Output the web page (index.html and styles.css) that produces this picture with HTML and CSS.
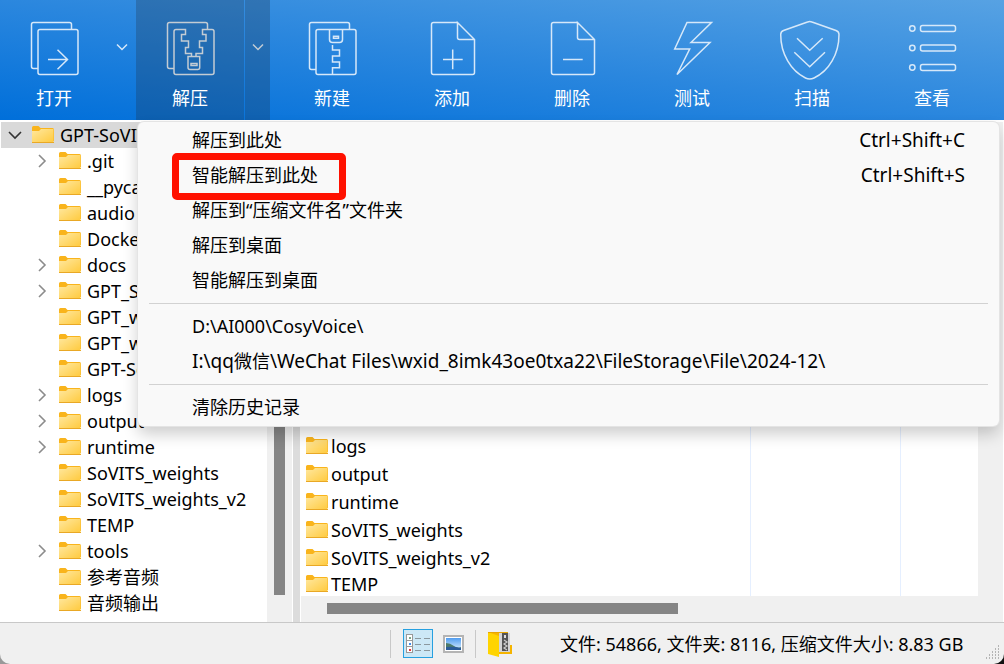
FILE: index.html
```html
<!DOCTYPE html>
<html lang="zh-CN">
 <head>
  <title>GPT-SoVITS</title>
  <meta charset="UTF-8">
  <link rel="stylesheet" href="styles.css">
 </head>
 <body>

 <!-- shared symbols -->
 <svg class="symbols">
  <defs>
   <linearGradient id="folder-fill" x1="0" y1="0" x2="1" y2="1">
    <stop offset="0" stop-color="#ffe8a0"/>
    <stop offset="1" stop-color="#ffca3e"/>
   </linearGradient>
   <linearGradient id="photo-fill" x1="0" y1="0" x2="0" y2="1">
    <stop offset="0" stop-color="#4f9cf0"/>
    <stop offset="1" stop-color="#dcefff"/>
   </linearGradient>
  </defs>
  <symbol id="folder" viewBox="0 0 22 18">
   <path d="M0 1.500q0-1.500 1.500-1.500h5l2 2H20.500q1.500 0 1.500 1.500V15H0z" fill="#f9b41c"/>
   <path d="M0 5h7l2-2h12.500v13.500H0z" fill="url(#folder-fill)"/>
   <path d="M0 16h22v1H0z" fill="#e9a825"/>
  </symbol>
  <symbol id="right" viewBox="0 0 12 14">
   <path d="M3 1l6 6-6 6" fill="none" stroke="#8c8c8c" stroke-width="1.600"/>
  </symbol>
  <symbol id="down" viewBox="0 0 14 12">
   <path d="M1 3l6 6 6-6" fill="none" stroke="#333" stroke-width="1.600"/>
  </symbol>
 </svg>

 <div class="window">

  <nav class="toolbar">
   <button class="tool narrow">
    <svg class="icon" viewBox="0 0 60 60"><path d="M14 48.500H9.500Q7.500 48.500 7.500 46.500V4.500Q7.500 2.500 9.500 2.500H45.500Q47.500 2.500 47.500 4.500V9.500"/><rect x="14" y="9.500" width="40" height="45" rx="2"/><path d="M24 39.500H43.500M33.500 29.700L43.500 39.500L33.500 49.300"/></svg>
    <span>打开</span>
   </button>
   <button class="drop" aria-label="打开选项"><svg viewBox="0 0 12 8"><path d="M1 1.500l5 5 5-5"/></svg></button>
   <button class="tool narrow active">
    <svg class="icon" viewBox="0 0 60 60"><path d="M14 48.500H9.500Q7.500 48.500 7.500 46.500V4.500Q7.500 2.500 9.500 2.500H45.500Q47.500 2.500 47.500 4.500V9.500"/><path d="M31.500 36V33.500H25.500V27.500H28.500V21H21.500V14.500H25.500V9.500H16Q14 9.500 14 11.500V52.500Q14 54.500 16 54.500H52Q54 54.500 54 52.500V11.500Q54 9.500 52 9.500H42.500V14.500H46V21H39.500V27.500H42.500V33.500H36V36"/><path d="M28 36.500H39.700V47.500Q39.700 49.500 37.700 49.500H30Q28 49.500 28 47.500z"/><rect x="31" y="43.500" width="6" height="2"/></svg>
    <span>解压</span>
   </button>
   <button class="drop active" aria-label="解压选项"><svg viewBox="0 0 12 8"><path d="M1 1.500l5 5 5-5"/></svg></button>
   <button class="tool">
    <svg class="icon" viewBox="0 0 60 60"><path d="M14 49.500H9.500Q7.500 49.500 7.500 47.500V4.500Q7.500 2.500 9.500 2.500H45.500Q47.500 2.500 47.500 4.500V9.500"/><rect x="14" y="9.500" width="40" height="45" rx="2"/><path d="M27.500 9.500V19.500Q27.500 22.500 30.500 22.500H37.500Q40.500 22.500 40.500 19.500V9.500"/><rect x="31.500" y="16.300" width="5" height="2"/><path d="M30.500 25V30H37.500V36H30.500V42H37.500V47.700H30.500V54.500"/></svg>
    <span>新建</span>
   </button>
   <button class="tool">
    <svg class="icon" viewBox="0 0 60 60"><path d="M35 2.500H11.500Q9.500 2.500 9.500 4.500V52.500Q9.500 54.500 11.500 54.500H50.500Q52.500 54.500 52.500 52.500V19.500L35.500 2.500V17.500Q35.500 19.500 37.500 19.500H52.500M21 39.500H40.700M30.700 29.500V49.300"/></svg>
    <span>添加</span>
   </button>
   <button class="tool">
    <svg class="icon" viewBox="0 0 60 60"><path d="M35 2.500H11.500Q9.500 2.500 9.500 4.500V52.500Q9.500 54.500 11.500 54.500H50.500Q52.500 54.500 52.500 52.500V19.500L35.500 2.500V17.500Q35.500 19.500 37.500 19.500H52.500M21 39.500H40.700"/></svg>
    <span>删除</span>
   </button>
   <button class="tool">
    <svg class="icon" viewBox="0 0 60 60"><path d="M25 2.500H49.500L29 22.500H48L15 54.500L27.700 29H12.700z"/></svg>
    <span>测试</span>
   </button>
   <button class="tool">
    <svg class="icon" viewBox="0 0 60 60"><path d="M25.500 2Q27.700 1 30 2L54 10.500Q57 11.600 57 14.500C57 34 47 51 32 58Q27.700 60 23.500 58C9 51-1.300 34-1.300 14.500Q-1.300 11.600 1.500 10.500zM15 18.300L27.700 30.300L40.700 18.300M12.300 32.300L27.700 46.700L43 32.300"/></svg>
    <span>扫描</span>
   </button>
   <button class="tool">
    <svg class="icon" viewBox="0 0 60 60"><circle cx="10.300" cy="8.500" r="2.700"/><circle cx="10.300" cy="28" r="2.700"/><circle cx="10.300" cy="47.500" r="2.700"/><rect x="18.500" y="5.500" width="35" height="6" rx="2"/><rect x="18.500" y="25" width="35" height="6" rx="2"/><rect x="18.500" y="44.500" width="35" height="6" rx="2"/></svg>
    <span>查看</span>
   </button>
  </nav>

  <main class="content">
   <section class="tree">
    <ul class="tree-list">
     <li class="root"><svg class="toggle"><use href="#down"/></svg><svg class="folder"><use href="#folder"/></svg>GPT-SoVITS</li>
     <li><svg class="toggle"><use href="#right"/></svg><svg class="folder"><use href="#folder"/></svg>.git</li>
     <li><svg class="toggle"></svg><svg class="folder"><use href="#folder"/></svg>__pycache__</li>
     <li><svg class="toggle"></svg><svg class="folder"><use href="#folder"/></svg>audio</li>
     <li><svg class="toggle"></svg><svg class="folder"><use href="#folder"/></svg>Docker</li>
     <li><svg class="toggle"><use href="#right"/></svg><svg class="folder"><use href="#folder"/></svg>docs</li>
     <li><svg class="toggle"><use href="#right"/></svg><svg class="folder"><use href="#folder"/></svg>GPT_SoVITS</li>
     <li><svg class="toggle"></svg><svg class="folder"><use href="#folder"/></svg>GPT_weights</li>
     <li><svg class="toggle"></svg><svg class="folder"><use href="#folder"/></svg>GPT_weights_v2</li>
     <li><svg class="toggle"></svg><svg class="folder"><use href="#folder"/></svg>GPT-SoVITS</li>
     <li><svg class="toggle"><use href="#right"/></svg><svg class="folder"><use href="#folder"/></svg>logs</li>
     <li><svg class="toggle"><use href="#right"/></svg><svg class="folder"><use href="#folder"/></svg>output</li>
     <li><svg class="toggle"><use href="#right"/></svg><svg class="folder"><use href="#folder"/></svg>runtime</li>
     <li><svg class="toggle"></svg><svg class="folder"><use href="#folder"/></svg>SoVITS_weights</li>
     <li><svg class="toggle"></svg><svg class="folder"><use href="#folder"/></svg>SoVITS_weights_v2</li>
     <li><svg class="toggle"></svg><svg class="folder"><use href="#folder"/></svg>TEMP</li>
     <li><svg class="toggle"><use href="#right"/></svg><svg class="folder"><use href="#folder"/></svg>tools</li>
     <li><svg class="toggle"></svg><svg class="folder"><use href="#folder"/></svg>参考音频</li>
     <li><svg class="toggle"></svg><svg class="folder"><use href="#folder"/></svg>音频输出</li>
    </ul>
    <div class="vscroll"><div class="vthumb"></div></div>
   </section>
   <div class="splitter"></div>
   <section class="files">
    <div class="file-view">
     <table class="file-table">
      <tbody>
       <tr class="scrolled"><td class="name"></td><td class="size"></td><td class="kind"></td></tr>
       <tr><td><div class="file"><svg class="folder"><use href="#folder"/></svg>logs</div></td><td></td><td></td></tr>
       <tr><td><div class="file"><svg class="folder"><use href="#folder"/></svg>output</div></td><td></td><td></td></tr>
       <tr><td><div class="file"><svg class="folder"><use href="#folder"/></svg>runtime</div></td><td></td><td></td></tr>
       <tr><td><div class="file"><svg class="folder"><use href="#folder"/></svg>SoVITS_weights</div></td><td></td><td></td></tr>
       <tr><td><div class="file"><svg class="folder"><use href="#folder"/></svg>SoVITS_weights_v2</div></td><td></td><td></td></tr>
       <tr><td><div class="file last"><svg class="folder"><use href="#folder"/></svg>TEMP</div></td><td></td><td></td></tr>
      </tbody>
     </table>
    </div>
    <div class="hscroll"><div class="hthumb"></div></div>
   </section>
  </main>

  <footer class="status">
   <div class="views">
    <button class="view selected" aria-label="列表">
     <svg width="28" height="27" viewBox="0 0 28 27"><g fill="#fff" stroke="#999"><rect x="2.500" y="4.500" width="6" height="6"/><rect x="2.500" y="10.500" width="6" height="6"/><rect x="2.500" y="16.500" width="6" height="6"/></g><path d="M11 8.500h6M20 8.500h6M11 14.500h6M20 14.500h6M11 20.500h6M20 20.500h6" stroke="#8b989e"/><path d="M5 7h2v2H5z" fill="#7aa88a"/><path d="M5 13h2v2H5z" fill="#3d8ef0"/><path d="M5 19h2v2H5z" fill="#e33"/></svg>
    </button>
    <button class="view" aria-label="缩略图">
     <svg width="21" height="18" viewBox="0 0 21 18"><rect x="1" y="1" width="19" height="16" fill="#fff" stroke="#b4b4b4" stroke-width="2"/><rect x="3" y="3" width="15" height="12" fill="url(#photo-fill)"/><path d="M3 8q4 0 8 3t7 1v3H3z" fill="#4d7a6a"/><path d="M3 12q7-1 15 1v2H3z" fill="#2c5c99"/></svg>
    </button>
   </div>
   <button class="view archive" aria-label="压缩文件">
    <svg width="26" height="27" viewBox="0 0 26 27"><path d="M1 3h20v12h4v9H1z" fill="#f5b400"/><path d="M12 3h11v19H12z" fill="#d4d4d4"/><path d="M15 3h6v18h-6z" fill="#555"/><path d="M17 5h2v3h-2z" fill="#ddd"/><path d="M17 10l3 2-3 2 3 2-3 2 3 2" fill="none" stroke="#ccc" stroke-width="1.200"/><path d="M1 2l11 4v21L1 24z" fill="#ffd400"/><path d="M1 2.500h20" stroke="#e8a500"/></svg>
   </button>
   <span class="summary">文件: 54866, 文件夹: 8116, 压缩文件大小: 8.83 GB</span>
   <svg class="grip" viewBox="0 0 15 15"><path d="M13 1h1M10 4h1M13 4h1M7 7h1M10 7h1M13 7h1M4 10h1M7 10h1M10 10h1M13 10h1M1 13h1M4 13h1M7 13h1M10 13h1M13 13h1" stroke="#a0a0a0" stroke-width="1.500"/></svg>
  </footer>

  <!-- drop-down of the extract button -->
  <div class="menu" role="menu">
   <button class="item" role="menuitem"><span>解压到此处</span><span class="latin">Ctrl+Shift+C</span></button>
   <button class="item" role="menuitem"><span class="marked">智能解压到此处</span><span class="latin">Ctrl+Shift+S</span></button>
   <button class="item" role="menuitem">解压到“压缩文件名”文件夹</button>
   <button class="item" role="menuitem">解压到桌面</button>
   <button class="item" role="menuitem">智能解压到桌面</button>
   <hr>
   <button class="item" role="menuitem">D:\AI000\CosyVoice\</button>
   <button class="item" role="menuitem"><span class="latin">I:\qq<span class="han">微信</span>\WeChat Files\wxid_8imk43oe0txa22\FileStorage\File\2024-12\</span></button>
   <hr>
   <button class="item" role="menuitem">清除历史记录</button>
  </div>

 </div>

</body>
</html>
```
FILE: styles.css
```css
* { box-sizing: border-box; }
html { background: linear-gradient(to right, #999, #111); }
body { margin: 0; font: 18px/26px "Noto Sans", "Noto Sans CJK SC", sans-serif; color: #000; }
button { margin: 0; padding: 0; border: 0; background: none; font: inherit; color: inherit; }
.symbols { position: absolute; width: 0; height: 0; }

.window { position: relative; display: flex; flex-direction: column; height: 100vh; background: #f0f0f0; border-radius: 0 0 10px 10px; overflow: hidden; }

/* toolbar */
.toolbar { display: flex; flex: none; height: 120px; padding-right: 12px; background: linear-gradient(to top right, #006fda, #2b87de, #57a2e3); color: #fff; }
.tool { flex: 1 1 120px; display: flex; flex-direction: column; align-items: center; padding-top: 20px; }
.narrow { flex: 0 0 108px; }
.icon { width: 60px; height: 60px; overflow: visible; fill: none; stroke: #d6e8f9; stroke-width: 1.5px; }
.tool span { margin-top: 6px; line-height: 24px; }
.drop { flex: none; width: 28px; padding-bottom: 32px; }
.drop svg { width: 12px; height: 8px; fill: none; stroke: #d6e8f9; stroke-width: 1.5px; }
.active { background: rgba(30, 40, 50, .25); }
.active svg { stroke: #c3ccd4; }
.drop.active { width: 25px; margin: 0 2px 0 1px; }

/* panels */
.content { flex: 1; display: flex; min-height: 0; padding-top: 2px; background: #fff; }
.tree { flex: none; width: 293px; display: flex; padding-right: 1px; overflow: hidden; }
.tree-list { flex: 1; min-width: 0; margin: 0; padding: 0; list-style: none; overflow: hidden; white-space: nowrap; }
.tree-list li { display: flex; align-items: center; height: 26px; padding-left: 35px; }
.tree-list .root { margin-left: 1px; padding-left: 7px; background: #d9d9d9; }
.toggle { flex: none; width: 14px; height: 14px; margin-right: 10px; }
.folder { flex: none; width: 22px; height: 18px; margin-right: 6px; }
.vscroll { flex: none; width: 25px; padding: 0 7px 27px; background: #f0f0f0; }
.vthumb { height: 100%; background: #858585; }
.splitter { flex: none; width: 7px; background: #dcdcdc; }
.files { flex: 1; min-width: 0; display: flex; flex-direction: column; padding: 0 1px; }
.file-view { flex: 1; min-height: 0; padding-right: 25px; background: #f0f0f0; overflow: hidden; }
.file-table { width: 100%; table-layout: fixed; border-spacing: 0; background: #fff; }
.file-table td { padding: 0; border-right: 1px solid #e5efff; }
.file-table td:last-child { border-right: 0; }
.file-table .size { width: 150px; }
.file-table .kind { width: 77px; }
.scrolled td { height: 310px; }
.file { display: flex; align-items: center; height: 28px; padding-left: 5px; line-height: 20px; }
.file .folder { margin-right: 3px; }
.last { height: 24px; }
.hscroll { flex: none; height: 26px; padding: 7px 26px; background: #f0f0f0; }
.hthumb { width: 54%; height: 11px; background: #858585; }

/* status bar */
.status { position: relative; flex: none; display: flex; align-items: center; height: 42px; padding-left: 390px; border-top: 1px solid #c8c8c8; white-space: nowrap; }
.views { display: flex; align-items: center; gap: 10px; height: 28px; padding: 0 11px 0 12px; border-left: 1px solid #c8c8c8; border-right: 1px solid #c8c8c8; }
.view { display: flex; }
.selected { background: #cce8f6; border: 1px solid #26a0e0; }
.archive { margin: 0 47px 0 11px; }
.grip { position: absolute; right: 4px; bottom: 4px; width: 15px; height: 15px; }

/* menu */
.menu { position: absolute; top: 122px; left: 138px; right: 5px; padding: 0 11px 2px; background: #f9f9f9; border-radius: 6px; box-shadow: 0 0 0 1px #e4e4e4, 0 8px 16px rgba(0, 0, 0, .2); }
.item { display: flex; justify-content: space-between; align-items: center; width: 100%; height: 35px; padding: 0 23px 0 43px; text-align: left; white-space: nowrap; }
.latin { font-size: 19px; }
.han { font-size: 18px; }
.menu hr { height: 1px; margin: 6px 0 5px; border: 0; background: #d2d2d2; }
.menu hr + .item { margin-top: -1px; }
.marked { position: relative; }
.marked::after { content: ""; position: absolute; top: -9px; bottom: -12px; left: -20px; right: -28px; border: 7px solid #ff1100; border-radius: 5px; }
```
